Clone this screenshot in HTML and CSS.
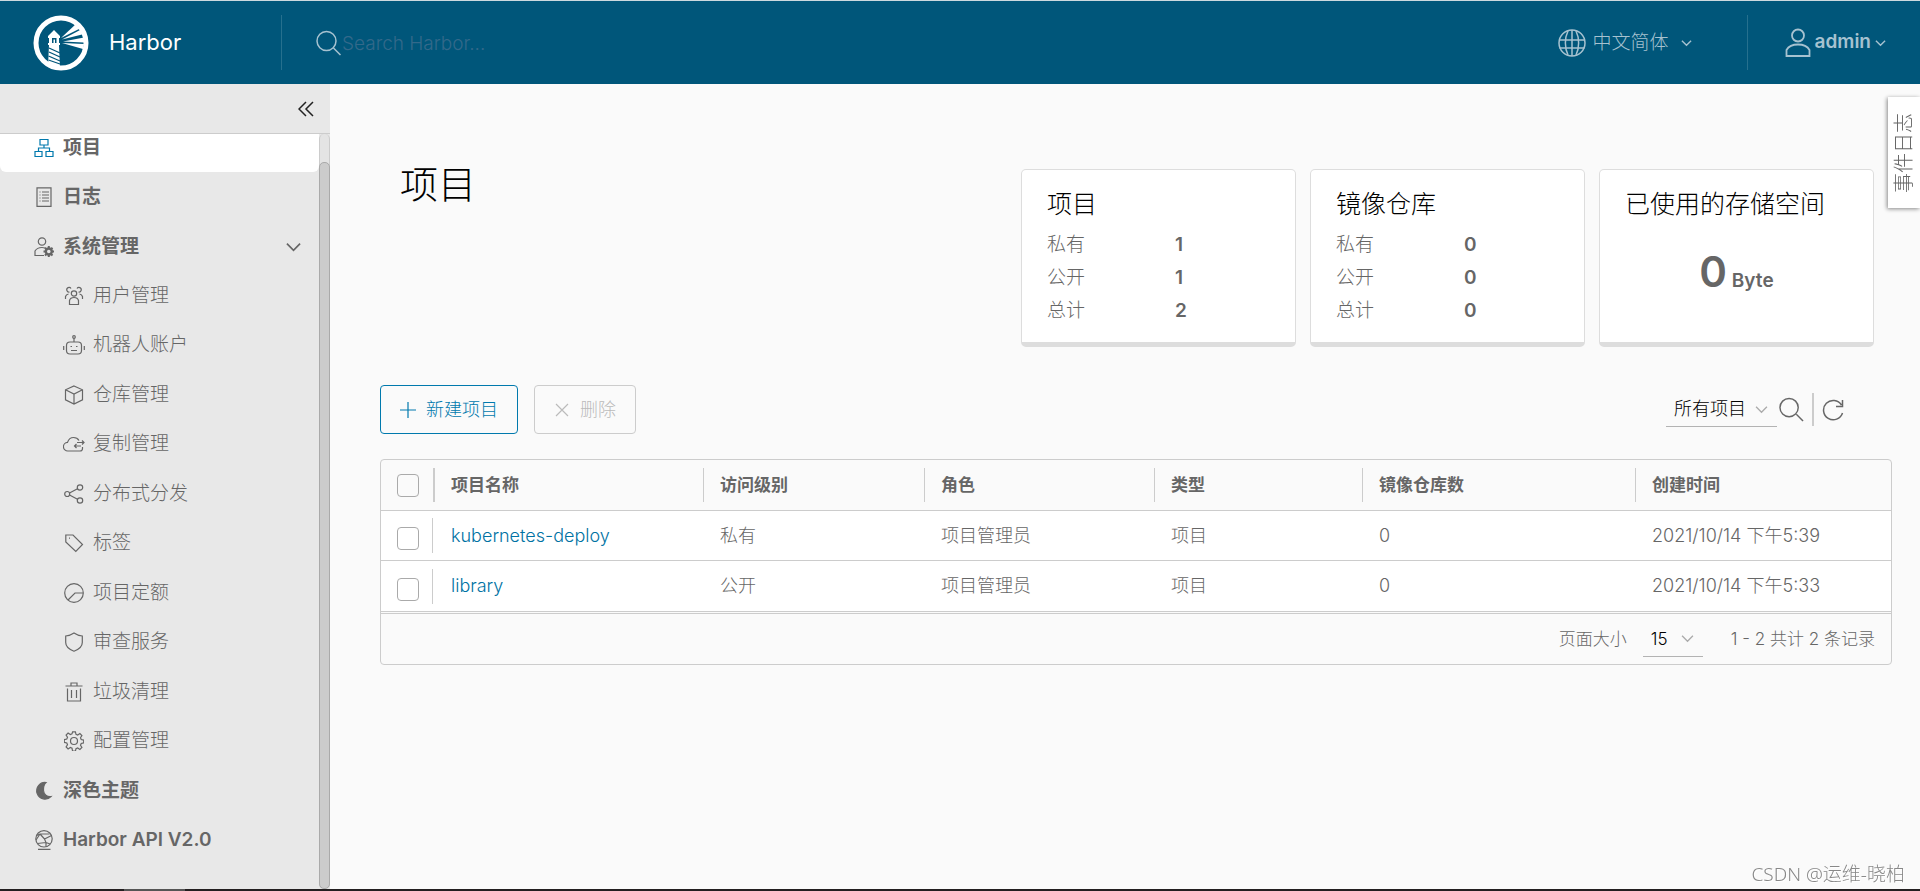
FILE: index.html
```html
<!DOCTYPE html>
<html lang="zh-CN">
<head>
<meta charset="utf-8">
<title>Harbor</title>
<link rel="stylesheet" href="styles.css">
</head>
<body>
<div class="app">
  <header class="header">
    <a class="brand" href="#">
      <svg class="logo" viewBox="0 0 56 56" aria-hidden="true">
        <circle cx="28" cy="28" r="25" fill="none" stroke="#fff" stroke-width="5"/>
        <g fill="#fff">
          <path d="M28 23 44 8l4 5z"/>
          <path d="M29 24.500 49 14l2 5z"/>
          <path d="M30 26.500 51 22.500v5z"/>
          <path d="M29 28 51 29l-1 5z"/>
          <path fill-rule="evenodd" d="M15 21l6-6 6 6v2h-1v5h1v2H15v-2h1v-5h-1zM19 23v5h4.500v-5z"/>
          <path d="M16 30h10l1 23-6 1-6-2z"/>
        </g>
        <rect x="20.500" y="24.500" width="1.500" height="3.500" fill="#fff"/>
        <path d="M16 33l11 5M16 37l11 5M15.500 41l11.500 5M15.500 45l11.500 4" stroke="#00567a" stroke-width="1.300"/>
      </svg>
      <span class="brand-name">Harbor</span>
    </a>
    <label class="search">
      <svg class="search-icon" viewBox="0 0 26 26" aria-hidden="true"><circle cx="10.500" cy="11" r="9.500"/><path d="M17.500 18l7 7"/></svg>
      <input class="search-input" type="text" placeholder="Search Harbor..." aria-label="Search Harbor">
    </label>
    <button class="head-btn lang" type="button">
      <svg class="globe" viewBox="0 0 28 28" aria-hidden="true"><circle cx="14" cy="14" r="13"/><path d="M14 1v26M1.500 11h25M1.500 19h25M10 2C6.500 9 6.500 19 10 26M18 2c3.500 7 3.500 17 0 24"/></svg>
      <span>中文简体</span>
      <svg class="caret" viewBox="0 0 12 8" aria-hidden="true"><path d="M1 1.500l5 5 5-5"/></svg>
    </button>
    <button class="head-btn user" type="button">
      <svg class="person" viewBox="0 0 26 30" aria-hidden="true"><circle cx="13" cy="7.500" r="6"/><path d="M1.500 28v-6c2-3.500 6.500-5.500 11.500-5.500s9.500 2 11.500 5.500v6z"/></svg>
      <strong>admin</strong>
      <svg class="caret" viewBox="0 0 12 8" aria-hidden="true"><path d="M1 1.500l5 5 5-5"/></svg>
    </button>
  </header>

  <div class="body">
    <aside class="sidebar">
      <div class="side-top">
        <button class="collapse" type="button" aria-label="收起">
          <svg viewBox="0 0 16 16" aria-hidden="true"><path d="M8 1L1 8l7 7M15 1L8 8l7 7"/></svg>
        </button>
      </div>
      <div class="side-scroll">
        <nav class="nav">
          <ul class="list">
            <li class="item active"><a class="link" href="#"><svg class="ico" viewBox="0 0 20 20"><path d="M6 1.500h8v5.500H6zM1 13.500h7v5H1zM12 13.500h7v5h-7zM10 7v3M4.500 13v-3h11v3"/></svg>项目</a></li>
            <li class="item"><a class="link" href="#"><svg class="ico" viewBox="0 0 20 20"><path d="M3 .800h14v18.500H3zM8 5h7M8 8h7M8 11h7M8 14h7M5.500 5h1M5.500 8h1M5.500 11h1M5.500 14h1"/></svg>日志</a></li>
            <li class="item"><a class="link" href="#"><svg class="ico" viewBox="0 0 20 20"><circle cx="8" cy="4.500" r="3.700"/><path d="M10 18.500H1V14c1.500-2.500 4-3.500 7-3.500 1 0 2 .200 3 .500"/><circle cx="14.800" cy="14.500" r="3" stroke-width="2.400"/><path stroke-width="2" d="M14.800 9v2M14.800 18v2M9.500 14.500h2M18 14.500h2M11 10.700l1.500 1.500M17 17l1.500 1.500M11 18.500l1.500-1.500M17 12.200l1.500-1.500"/></svg>系统管理<svg class="toggle" viewBox="0 0 16 10"><path d="M1 1.500l7 7 7-7"/></svg></a></li>
          </ul>
          <ul class="list sub">
            <li class="item"><a class="link" href="#"><svg class="ico" viewBox="0 0 20 20"><circle cx="10" cy="7.500" r="2.700"/><path d="M5.500 18.500v-4c.500-2 2.300-3 4.500-3s4 1 4.500 3v4zM5.500 6A2.300 2.300 0 1 1 7 2.500M14.500 6A2.300 2.300 0 1 0 13 2.500M1.500 13v-2.500C2 9 3 8.300 4.500 8M18.500 13v-2.500C18 9 17 8.300 15.500 8"/></svg>用户管理</a></li>
            <li class="item"><a class="link" href="#"><svg class="ico wide" viewBox="0 0 22 20"><rect x="3.500" y="7" width="15" height="12" rx="3.500"/><circle cx="11" cy="2" r="1.300"/><path d="M11 3.300V7M.700 11v4M21.300 11v4M7.500 11.500h1.500M13 11.500h1.500M8 15.500h6"/></svg>机器人账户</a></li>
            <li class="item"><a class="link" href="#"><svg class="ico" viewBox="0 0 20 20"><path d="M10 1l8.500 3.800v10L10 19l-8.500-4.200v-10zM1.500 4.800L10 9l8.500-4.200M10 9v10"/></svg>仓库管理</a></li>
            <li class="item"><a class="link" href="#"><svg class="ico wide" viewBox="0 0 22 20"><path d="M19.500 13v1.500c0 1.500-1 2.500-2.500 2.500H5a4.300 4.300 0 0 1-.500-8.600C5.500 5.500 7.500 3.500 10.500 3.500c2.500 0 4.500 1.200 5.500 3M14 8.500h7M19 6.500l2 2-2 2M18 12h-6.500M13.500 10l-2 2 2 2"/></svg>复制管理</a></li>
            <li class="item"><a class="link" href="#"><svg class="ico" viewBox="0 0 20 20"><circle cx="3.200" cy="10" r="2.500"/><circle cx="16" cy="3.500" r="2.700"/><circle cx="16" cy="16.500" r="2.700"/><path d="M5.500 9l8-4.200M5.500 11l8 4.200"/></svg>分布式分发</a></li>
            <li class="item"><a class="link" href="#"><svg class="ico" viewBox="0 0 20 20"><path d="M1.800 2h7.200l9.500 9.500-6.700 7L1.800 9zM5 5.200h1"/></svg>标签</a></li>
            <li class="item"><a class="link" href="#"><svg class="ico" viewBox="0 0 20 20"><circle cx="10" cy="10" r="9.300"/><path d="M19 10h-8l-7 7"/></svg>项目定额</a></li>
            <li class="item"><a class="link" href="#"><svg class="ico" viewBox="0 0 20 20"><path d="M10 1c2.500 1.700 5 2.700 8.300 3v6.500c0 4-3.800 7-8.300 8.700-4.500-1.700-8.300-4.700-8.300-8.700V4C5 3.700 7.500 2.700 10 1z"/></svg>审查服务</a></li>
            <li class="item"><a class="link" href="#"><svg class="ico" viewBox="0 0 20 20"><path d="M1.500 4h17M3.500 6.500V19h13V6.500M7 4V1h6v3M7.500 8v8M12.500 8v8"/></svg>垃圾清理</a></li>
            <li class="item"><a class="link" href="#"><svg class="ico" viewBox="0 0 20 20"><circle cx="10" cy="10" r="3.500"/><path d="M8.600 .800h2.800l.600 2.500 1.700.700 2.200-1.400 2 2-1.400 2.200.700 1.700 2.500.600v2.800l-2.500.600-.700 1.700 1.400 2.200-2 2-2.200-1.400-1.700.700-.600 2.500H8.600L8 17.200l-1.700-.700-2.200 1.400-2-2 1.400-2.200-.700-1.700-2.500-.600V8.600L2.800 8l.700-1.700-1.400-2.200 2-2 2.200 1.400L8 2.800z"/></svg>配置管理</a></li>
          </ul>
          <ul class="list">
            <li class="item"><a class="link" href="#"><svg class="ico" viewBox="0 0 20 20"><path class="solid" d="M12 1.500A8.300 8.300 0 1 0 17 15.500C13 16 9.800 13.500 9.500 9.500 9.300 6 10.300 3 12 1.500z"/></svg>深色主题</a></li>
            <li class="item"><a class="link" href="#"><svg class="ico" viewBox="0 0 20 20"><circle cx="10" cy="8.800" r="8.200"/><path d="M4 19.300h12.500M2.500 5.500L6 4l9.500 0M6 4l4.500 5 7-3.500M10.500 9l1.500 3.500 0 4M12 12.500l-8.500 1M6 4L2 10M12 12.500l4 1.500"/></svg>Harbor API V2.0</a></li>
          </ul>
        </nav>
        <div class="track"><div class="thumb"></div></div>
      </div>
    </aside>

    <main class="main">
      <section class="summary">
        <h1 class="title">项目</h1>
        <div class="cards">
          <article class="card">
            <h2 class="card-title">项目</h2>
            <dl class="stats"><dt>私有</dt><dd>1</dd><dt>公开</dt><dd>1</dd><dt>总计</dt><dd>2</dd></dl>
          </article>
          <article class="card">
            <h2 class="card-title">镜像仓库</h2>
            <dl class="stats"><dt>私有</dt><dd>0</dd><dt>公开</dt><dd>0</dd><dt>总计</dt><dd>0</dd></dl>
          </article>
          <article class="card">
            <h2 class="card-title">已使用的存储空间</h2>
            <p class="storage"><span class="amount">0</span> Byte</p>
          </article>
        </div>
      </section>

      <div class="toolbar">
        <button class="btn primary" type="button"><svg viewBox="0 0 16 16" aria-hidden="true"><path d="M8 0v16M0 8h16"/></svg>新建项目</button>
        <button class="btn" type="button" disabled><svg viewBox="0 0 16 16" aria-hidden="true"><path d="M2 2l12 12M14 2L2 14"/></svg>删除</button>
        <div class="filters">
          <span class="select-wrap scope">
            <select class="select" aria-label="项目范围"><option>所有项目</option></select>
            <svg class="caret" viewBox="0 0 12 8" aria-hidden="true"><path d="M1 1.500l5 5 5-5"/></svg>
          </span>
          <button class="icon-btn find" type="button" aria-label="搜索"><svg viewBox="0 0 26 26" aria-hidden="true"><circle cx="10.500" cy="11" r="9.500"/><path d="M18 18l7 7"/></svg></button>
          <button class="icon-btn refresh" type="button" aria-label="刷新"><svg viewBox="0 0 22 22" aria-hidden="true"><path d="M20.500 14A9.700 9.700 0 1 1 19.500 6M20.500 1v6.500H14"/></svg></button>
        </div>
      </div>

      <div class="grid">
        <table class="table">
          <colgroup><col class="c-check"><col class="c-name"><col class="c-access"><col class="c-role"><col class="c-type"><col class="c-count"><col class="c-time"></colgroup>
          <thead>
            <tr>
              <th class="check"><input type="checkbox" aria-label="全选"></th>
              <th>项目名称</th><th>访问级别</th><th>角色</th><th>类型</th><th>镜像仓库数</th><th>创建时间</th>
            </tr>
          </thead>
          <tbody>
            <tr>
              <td class="check"><input type="checkbox" aria-label="kubernetes-deploy"></td>
              <td><a class="name" href="#">kubernetes-deploy</a></td><td>私有</td><td>项目管理员</td><td>项目</td><td>0</td><td>2021/10/14 下午5:39</td>
            </tr>
            <tr>
              <td class="check"><input type="checkbox" aria-label="library"></td>
              <td><a class="name" href="#">library</a></td><td>公开</td><td>项目管理员</td><td>项目</td><td>0</td><td>2021/10/14 下午5:33</td>
            </tr>
          </tbody>
        </table>
        <div class="grid-foot">
          <label for="page-size">页面大小</label>
          <span class="select-wrap size">
            <select class="select" id="page-size"><option>15</option></select>
            <svg class="caret" viewBox="0 0 12 8" aria-hidden="true"><path d="M1 1.500l5 5 5-5"/></svg>
          </span>
          <span>1 - 2 共计 2 条记录</span>
        </div>
      </div>
    </main>
  </div>
  <div class="bottom-edge"><div class="bottom-mark"></div></div>
  <button class="event-tab" type="button"><span>事件日志</span></button>
  <div class="watermark">CSDN @运维-晓柏</div>
</div>
</body>
</html>
```

FILE: styles.css
```css
* { box-sizing: border-box; }
body {
  margin: 0;
  background: #fafafa;
  color: #666;
  font: 300 17px/24px Inter, "Noto Sans CJK SC", sans-serif;
}
ul, dl, dd, p, h1, h2 { margin: 0; padding: 0; }
ul { list-style: none; }
a { color: inherit; text-decoration: none; }
button, input, select { font: inherit; color: inherit; }
button { background: none; border: 0; padding: 0; }
svg { display: block; flex: none; fill: none; stroke: currentColor; }

.app {
  display: flex;
  flex-direction: column;
  height: 100vh;
  overflow: hidden;
}

.header {
  flex: none;
  display: flex;
  align-items: center;
  height: 84px;
  border-top: 1px solid #ccd9df;
  background: #00567a;
  color: #a6c2d0;
  font-size: 19px;
}
.brand {
  display: flex;
  align-items: center;
  gap: 20px;
  width: 281px;
  padding-left: 33px;
  color: #fff;
}
.logo { width: 56px; height: 56px; stroke: none; }
.brand-name { padding-bottom: 2px; font-size: 22px; font-weight: 400; }
.search {
  flex: 1;
  display: flex;
  align-items: center;
  height: 55px;
  padding-left: 34px;
  border-left: 1px solid #26708e;
}
.search-icon { width: 26px; height: 26px; stroke-width: 1.5; }
.search-input {
  flex: 1;
  border: 0;
  background: none;
  outline: none;
  padding: 2px 0 0;
}
.search-input::placeholder { color: #33698a; opacity: 1; }
.head-btn { display: flex; align-items: center; height: 55px; }
.head-btn .caret { width: 11px; height: 8px; stroke-width: 1.5; }
.lang { gap: 7px; width: 189px; }
.lang .caret { margin-left: 5px; }
.globe { width: 28px; height: 28px; stroke-width: 1.5; }
.user {
  gap: 4px;
  padding: 0 34px 0 37px;
  border-left: 1px solid #26708e;
}
.user strong { padding-bottom: 1px; font-weight: 600; }
.person { width: 26px; height: 30px; stroke-width: 1.8; }

.body { flex: 1; display: flex; min-height: 0; }
.sidebar {
  flex: none;
  display: flex;
  flex-direction: column;
  width: 330px;
  background: #e8e8e8;
}
.side-top {
  flex: none;
  display: flex;
  justify-content: flex-end;
  align-items: center;
  height: 50px;
  padding-right: 16px;
  border-bottom: 1px solid #ccc;
}
.collapse svg { width: 16px; height: 16px; stroke: #222; stroke-width: 1.5; }
.side-scroll { flex: 1; display: flex; min-height: 0; overflow: hidden; }
.nav { flex: 1; margin-top: -11px; font-size: 19px; }
.item { height: 49px; }
.item:nth-child(even) { margin-bottom: 1px; }
.link {
  display: flex;
  align-items: center;
  gap: 9px;
  height: 100%;
  padding: 0 18px 0 34px;
  font-weight: 600;
}
.sub .link { padding-left: 64px; font-weight: 300; }
.active { background: #fff; border-radius: 0 0 6px 6px; }
.active .ico { color: #0079ad; }
.ico { width: 20px; height: 20px; stroke-width: 1.2; }
.wide { width: 22px; margin: 0 -1px; }
.solid { fill: currentColor; }
.toggle { width: 15px; height: 10px; margin-left: auto; stroke-width: 1.8; }
.track {
  width: 11px;
  padding-top: 28px;
  border: 1px solid #ccc;
  border-width: 0 1px;
  border-radius: 5px;
  background: #e4e4e4;
}
.thumb {
  height: 100%;
  border: 1px solid #aaa;
  border-radius: 5px;
  background: #ccc;
  margin: 0 -1px;
}

.main { flex: 1; min-width: 0; padding: 85px 28px 0 50px; }
.summary {
  display: flex;
  justify-content: space-between;
  padding: 0 18px 0 20px;
}
.title {
  margin-top: -7px;
  color: #000;
  font-size: 38px;
  line-height: 44px;
  font-weight: 300;
}
.cards { display: flex; gap: 14px; }
.card {
  width: 275px;
  height: 178px;
  padding: 20px 25px 0;
  border: 1px solid #ddd;
  border-bottom-width: 5px;
  border-radius: 5px;
  background: #fff;
}
.card-title {
  color: #000;
  font-size: 25px;
  line-height: 28px;
  font-weight: 300;
  white-space: nowrap;
}
.stats {
  display: grid;
  grid-template-columns: 128px 1fr;
  margin-top: 10px;
  font-size: 19px;
  line-height: 33px;
}
.stats dd { font-weight: 600; }
.storage {
  margin-top: 30px;
  font-size: 19px;
  line-height: 48px;
  font-weight: 600;
  text-align: center;
}
.amount { font-size: 42px; }

.toolbar {
  display: flex;
  align-items: center;
  gap: 16px;
  margin-top: 38px;
}
.btn {
  display: flex;
  align-items: center;
  gap: 10px;
  height: 49px;
  padding: 0 19px;
  border: 1px solid #ccc;
  border-radius: 4px;
  color: #bbb;
  font-size: 18px;
}
.btn svg { width: 16px; height: 16px; stroke-width: 1.2; }
.btn.primary { border-color: #0079ad; color: #0079ad; }
.filters { display: flex; align-items: center; margin-left: auto; padding-right: 48px; }
.select-wrap {
  position: relative;
  display: flex;
  align-items: center;
  border-bottom: 1px solid #b3b3b3;
}
.select-wrap .caret {
  position: absolute;
  right: 9px;
  width: 13px;
  height: 9px;
  color: #aaa;
  stroke-width: 1.2;
  pointer-events: none;
}
.select {
  appearance: none;
  width: 100%;
  border: 0;
  background: none;
  padding: 0 8px;
  color: #000;
}
.scope { width: 111px; height: 35px; font-size: 18px; }
.icon-btn { display: flex; align-items: center; height: 33px; }
.find { padding: 0 8px 0 2px; border-right: 2px solid #ccc; }
.find svg { width: 25px; height: 25px; stroke-width: 1.5; }
.refresh { padding-left: 8px; }
.refresh svg { width: 22px; height: 22px; stroke-width: 1.5; }

.grid {
  margin-top: 25px;
  border: 1px solid #ccc;
  border-radius: 4px;
}
.table {
  width: 100%;
  table-layout: fixed;
  border-collapse: separate;
  border-spacing: 0;
}
.c-check { width: 54px; }
.c-name { width: 269px; }
.c-access { width: 221px; }
.c-role { width: 230px; }
.c-type { width: 208px; }
.c-count { width: 273px; }
.table th, .table td {
  padding: 0 0 0 16px;
  border-bottom: 1px solid #ccc;
  text-align: left;
  font-size: 18px;
}
.table th { height: 51px; font-size: 17px; font-weight: 600; }
.table td { height: 50px; background: #fff; }
.table tbody tr:last-child td { height: 51px; }
.table th:not(:last-child) {
  background: linear-gradient(#ccc, #ccc) right center / 1px 34px no-repeat;
}
.table th.check { background-size: 2px 34px; }
.table td.check { background: #fff linear-gradient(#ccc, #ccc) right 2px center / 1px 35px no-repeat; }
.check input {
  appearance: none;
  display: block;
  width: 22px;
  height: 23px;
  margin: 0;
  border: 1px solid #aaa;
  border-radius: 4px;
}
td.check input { margin-top: 6px; }
.name { color: #0072a3; }
.grid-foot {
  display: flex;
  align-items: center;
  justify-content: flex-end;
  gap: 16px;
  height: 51px;
  margin-top: 1px;
  padding-right: 16px;
  border-top: 1px solid #ccc;
}
.size { width: 60px; height: 35px; margin-right: 12px; }

.bottom-edge { flex: none; height: 2px; padding-left: 124px; background: #231f20; }
.bottom-mark { width: 61px; height: 2px; background: #555; }
.event-tab {
  position: fixed;
  top: 97px;
  right: 0;
  width: 32px;
  height: 111px;
  background: #fff;
  box-shadow: -1px 1px 4px #888;
  font-size: 20px;
  line-height: 32px;
}
.event-tab span {
  display: block;
  writing-mode: vertical-rl;
  text-orientation: sideways;
  transform: rotate(180deg);
  text-align: center;
}
.watermark {
  position: fixed;
  right: 15px;
  bottom: 5px;
  color: #888;
  font-family: "Noto Sans", "Noto Sans CJK SC", sans-serif;
  font-size: 19px;
  text-shadow: 1px 1px 0 #fff;
}
```
